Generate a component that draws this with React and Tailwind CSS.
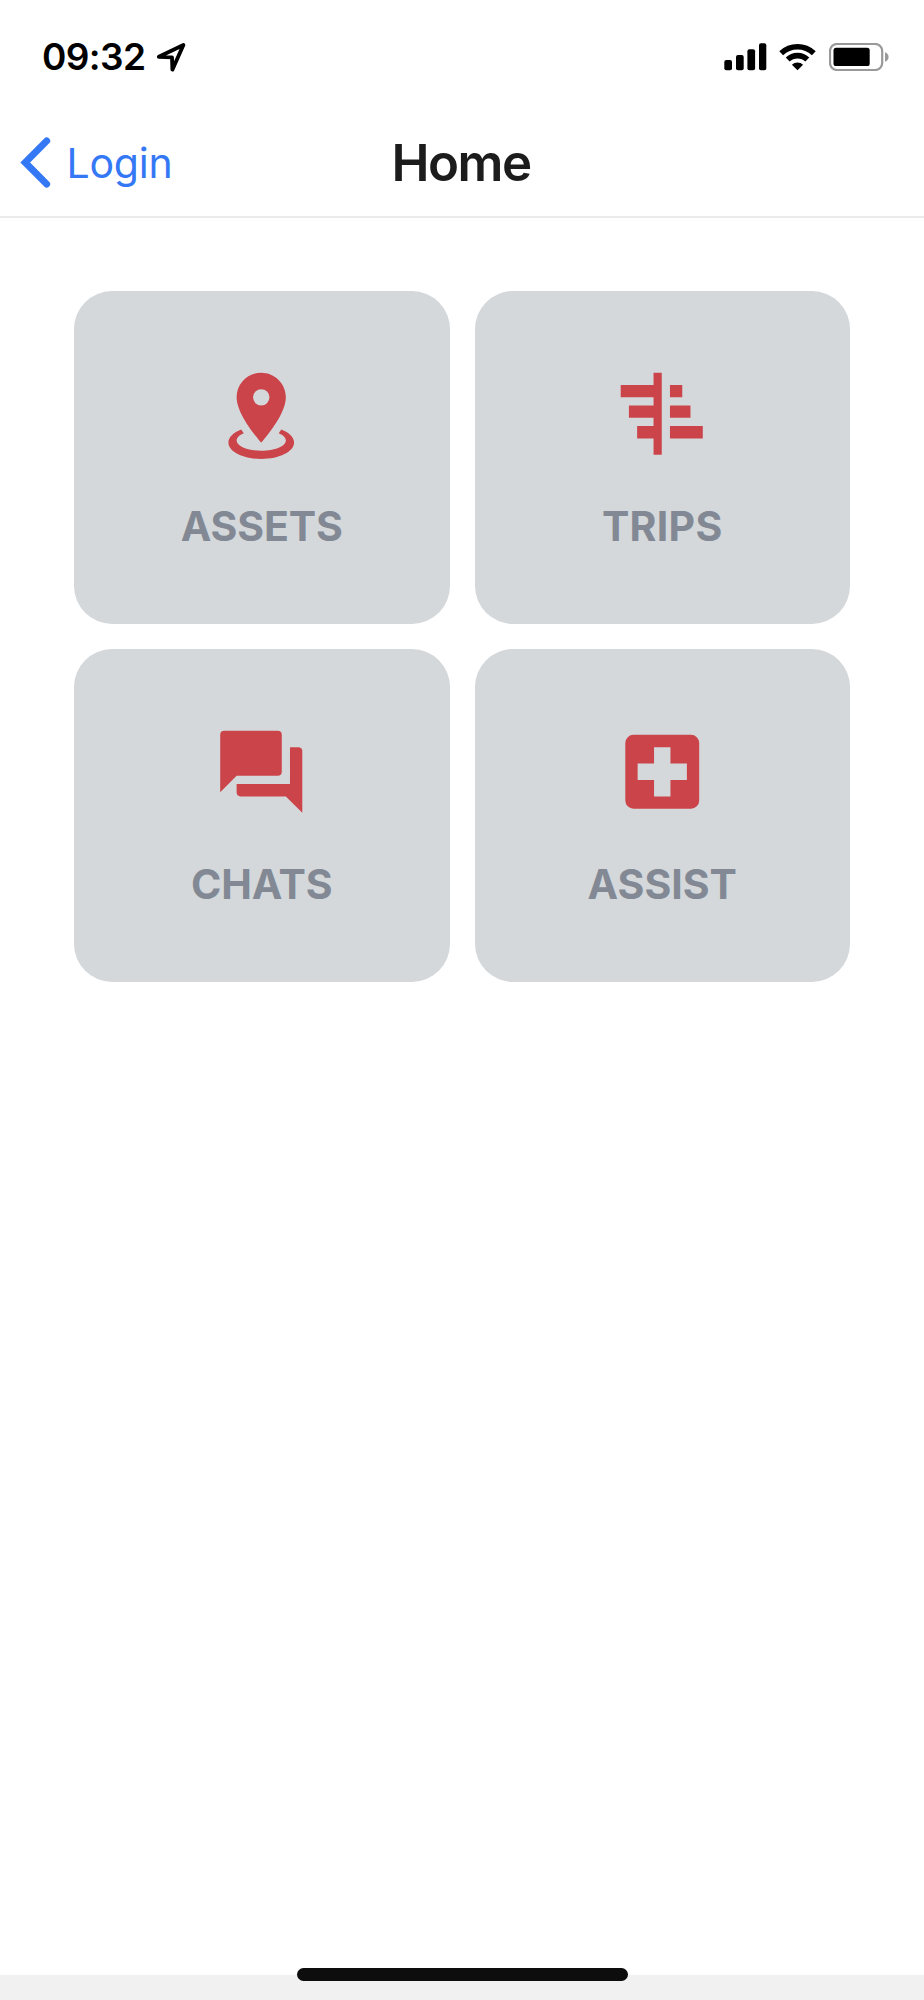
import React from "react";

const menuItems = [
  {
    label: "ASSETS",
    tracking: "tracking-[-0.1px]",
    shift: "-translate-x-px",
    icon: "M12,2C15.31,2 18,4.66 18,7.95C18,12.41 12,19 12,19S6,12.41 6,7.95C6,4.66 8.69,2 12,2M12,6A2,2 0 0,0 10,8A2,2 0 0,0 12,10A2,2 0 0,0 14,8A2,2 0 0,0 12,6M20,19C20,21.21 16.42,23 12,23C7.58,23 4,21.21 4,19C4,17.71 5.22,16.56 7.11,15.83L7.75,16.74C6.67,17.19 6,17.81 6,18.5C6,19.88 8.69,21 12,21C15.31,21 18,19.88 18,18.5C18,17.81 17.33,17.19 16.25,16.74L16.89,15.83C18.78,16.56 20,17.71 20,19Z",
  },
  {
    label: "TRIPS",
    tracking: "tracking-[0.3px]",
    shift: "-translate-x-[0.5px]",
    icon: "M10,2H12V22H10V18H6V15H10V13H4V10H10V8H2V5H10V2M14,5H17V8H14V5M14,10H19V13H14V10M14,15H22V18H14V15Z",
  },
  {
    label: "CHATS",
    tracking: "tracking-[-0.1px]",
    shift: "-translate-x-px",
    icon: "M17,12V3A1,1 0 0,0 16,2H3A1,1 0 0,0 2,3V17L6,13H16A1,1 0 0,0 17,12M21,6H19V15H6V17A1,1 0 0,0 7,18H18L22,22V7A1,1 0 0,0 21,6Z",
  },
  {
    label: "ASSIST",
    tracking: "tracking-normal",
    shift: "translate-x-0",
    icon: "M18,14H14V18H10V14H6V10H10V6H14V10H18V14M19,3H5A2,2 0 0,0 3,5V19A2,2 0 0,0 5,21H19A2,2 0 0,0 21,19V5A2,2 0 0,0 19,3Z",
  },
];

const StatusBar = () => (
  <div className="flex h-[112px] items-center justify-between pt-px pl-[42px] pr-[34px] text-black">
    <div className="flex items-center gap-[11px]">
      <span className="text-[37px] leading-none font-semibold tracking-[-0.6px]">
        09:32
      </span>
      <svg width="30" height="30" viewBox="0 0 30 30" fill="none">
        <path
          d="M2.8 14.8L27.4 3L16.4 27.6L16 15.4Z"
          stroke="currentColor"
          strokeWidth="3.8"
          strokeLinejoin="round"
        />
      </svg>
    </div>
    <div className="flex items-center gap-3">
      <svg width="43" height="28" viewBox="0 0 43 28" fill="currentColor">
        <rect x="0.3" y="17" width="7.7" height="10.3" rx="2" />
        <rect x="12" y="12" width="7.7" height="15.3" rx="2" />
        <rect x="23.4" y="6.3" width="7.7" height="21" rx="2" />
        <rect x="35" y="0.3" width="7.3" height="27" rx="2" />
      </svg>
      <svg width="38" height="28" viewBox="0 0 38 28" fill="none">
        <path
          d="M2.2 10.2A23.8 23.8 0 0 1 34.8 10.2M8.7 16.6A14 14 0 0 1 28.3 16.6"
          stroke="currentColor"
          strokeWidth="5.6"
        />
        <path
          d="M18.5 27.3L12.9 21.8A8 8 0 0 1 24.1 21.8Z"
          fill="currentColor"
        />
      </svg>
      <svg width="61" height="28" viewBox="0 0 61 28">
        <rect
          x="1"
          y="1"
          width="52.2"
          height="26"
          rx="7"
          fill="none"
          stroke="#999"
          strokeWidth="2.2"
        />
        <rect x="4.5" y="4.8" width="36.2" height="18.2" rx="2.6" />
        <path d="M56 9.2C60.8 11 60.8 17 56 18.8Z" fill="#999" />
      </svg>
    </div>
  </div>
);

const NavBar = () => (
  <header className="grid h-[106px] grid-cols-3 items-center border-b-2 border-[#ebebeb] pb-[2px]">
    <button className="flex items-center gap-[14.5px] pl-5 text-[#3478f6]">
      <svg width="32" height="52" viewBox="0 0 32 52" fill="none">
        <path
          d="M26.7 3.9L5.2 25.5L26.7 47.1"
          stroke="currentColor"
          strokeWidth="6.9"
          strokeLinecap="round"
        />
      </svg>
      <span className="text-[41px] leading-none tracking-[-0.2px]">Login</span>
    </button>
    <h1 className="pr-[2px] pb-[2px] text-center text-[51px] leading-none font-semibold tracking-[-1.5px] text-[#1c1c1c]">
      Home
    </h1>
  </header>
);

const MenuCard = ({ item }) => (
  <button className="flex h-[333.5px] flex-col items-center rounded-[38px] bg-[#d4d8db] pt-[74px]">
    <svg
      className={`size-[98.5px] text-[#cb444a] ${item.shift}`}
      viewBox="0 0.12 24 24"
      fill="currentColor"
      fillRule="evenodd"
    >
      <path d={item.icon} />
    </svg>
    <span
      className={`mt-[42.5px] text-[41px] leading-[41px] font-bold text-[#828994] ${item.tracking}`}
    >
      {item.label}
    </span>
  </button>
);

export default function App() {
  return (
    <div className="flex h-[2000px] w-[924px] flex-col bg-white font-['Inter',sans-serif]">
      <StatusBar />
      <NavBar />
      <main className="grid flex-1 grid-cols-2 content-start gap-x-[25px] gap-y-[24.5px] px-[74px] pt-[72.5px]">
        {menuItems.map((item) => (
          <MenuCard key={item.label} item={item} />
        ))}
      </main>
      <footer className="relative h-[25px] bg-[#f1f1f1]">
        <div className="absolute -top-[7px] left-[297px] h-[12.5px] w-[330.5px] rounded-full bg-[#0d0d0d]" />
      </footer>
    </div>
  );
}
